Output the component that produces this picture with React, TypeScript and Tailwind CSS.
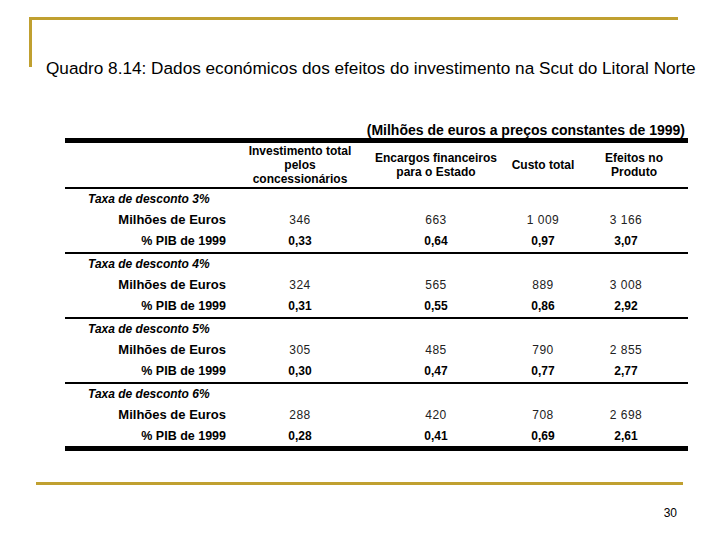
import React from 'react';

interface Group {
  rate: string;
  euros: string[];
  pib: string[];
}

const groups: Group[] = [
  { rate: '3%', euros: ['346', '663', '1 009', '3 166'], pib: ['0,33', '0,64', '0,97', '3,07'] },
  { rate: '4%', euros: ['324', '565', '889', '3 008'], pib: ['0,31', '0,55', '0,86', '2,92'] },
  { rate: '5%', euros: ['305', '485', '790', '2 855'], pib: ['0,30', '0,47', '0,77', '2,77'] },
  { rate: '6%', euros: ['288', '420', '708', '2 698'], pib: ['0,28', '0,41', '0,69', '2,61'] },
];

const cols = 'grid grid-cols-[180px_110px_162px_52px_119px]';

const ValueCells = ({ values, bold }: { values: string[]; bold?: boolean }) => (
  <>
    {values.map((v, i) => (
      <div
        key={i}
        className={`flex justify-center whitespace-nowrap ${i === 3 ? 'pr-[5px]' : ''} ${
          bold ? 'font-bold' : 'font-normal tracking-[0.5px] text-[#222]'
        }`}
      >
        {v}
      </div>
    ))}
  </>
);

const RateGroup = ({ group, last }: { group: Group; last: boolean }) => (
  <div className={last ? 'border-b-[5px] border-black' : 'border-b-2 border-black'}>
    {/* Taxa */}
    <div className="h-[20px] leading-[20px] pl-[23px] italic font-bold">
      Taxa de desconto {group.rate}
    </div>

    {/* Milhões de Euros */}
    <div className={`${cols} h-[22px] leading-[22px]`}>
      <div className="text-right pr-[19px] font-bold text-[13px]">Milhões de Euros</div>
      <ValueCells values={group.euros} />
    </div>

    {/* % PIB */}
    <div className={`${cols} ${last ? 'h-[20px] leading-[20px]' : 'h-[21px] leading-[21px]'}`}>
      <div className="text-right pr-[19px] font-bold text-[12.5px]">% PIB de 1999</div>
      <ValueCells values={group.pib} bold />
    </div>
  </div>
);

const App = () => {
  return (
    <div className="w-[720px] h-[540px] bg-white text-black pt-[17px] font-['Liberation_Sans',Arial,sans-serif] overflow-hidden">
      {/* Gold bracket */}
      <div className="ml-[29px] w-[649px] h-[50px] border-t-[3px] border-l-[3px] border-[#c0a030]" />

      {/* Title */}
      <h1 className="-mt-[9px] ml-[46px] text-[17.2px] leading-[20px] font-normal whitespace-nowrap">
        Quadro 8.14: Dados económicos dos efeitos do investimento na Scut do Litoral Norte
      </h1>

      {/* Units */}
      <p className="mt-[44px] pr-[35px] text-right text-[14px] leading-[16px] font-bold">
        (Milhões de euros a preços constantes de 1999)
      </p>

      {/* Table */}
      <div className="ml-[65px] w-[623px] text-[12px] border-t-[5px] border-black">
        <div className={`${cols} h-[46px] items-center leading-[14px] font-bold border-b-2 border-black`}>
          <div />
          <div className="text-center">
            Investimento total
            <br />
            pelos
            <br />
            concessionários
          </div>
          <div className="text-center">
            Encargos financeiros
            <br />
            para o Estado
          </div>
          <div className="flex justify-center whitespace-nowrap">Custo total</div>
          <div className="text-center pl-[11px]">
            Efeitos no
            <br />
            Produto
          </div>
        </div>

        {groups.map((g, i) => (
          <RateGroup key={g.rate} group={g} last={i === groups.length - 1} />
        ))}
      </div>

      {/* Bottom gold rule */}
      <div className="mt-[31px] ml-[36px] w-[647px] h-[3px] bg-[#c0a030]" />

      {/* Page number */}
      <div className="mt-[21px] pr-[43px] text-right text-[12px] leading-[14px]">30</div>
    </div>
  );
};

export default App;
